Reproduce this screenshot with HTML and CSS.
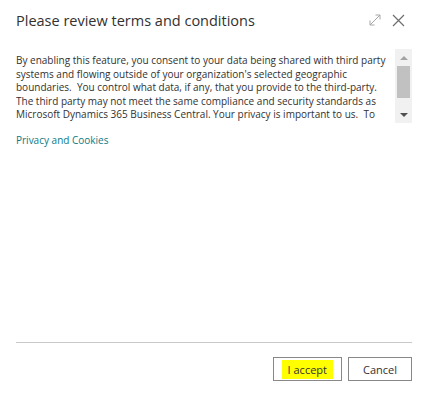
FILE: index.html
```html
<!DOCTYPE html>
<html lang="en">

<head>
    <meta charset="UTF-8">
    <meta name="viewport" content="width=device-width, initial-scale=1.0">
    <title>Terms</title>
    <link rel="stylesheet" href="styles.css">
</head>

<body>

    <div class="dialog">
        <div class="header">
            <h1 class="title">Please review terms and conditions</h1>
            <div class="headerIcons">
                <svg class="expandIcon" width="12" height="12" viewBox="0 0 12 12">
                    <path d="M1 11 L11 1 M6.5 1 H11 V5.5 M1 6.5 V11 H5.5" fill="none" stroke="#a6a6a6" stroke-width="1"/>
                </svg>
                <svg class="closeIcon" width="13" height="13" viewBox="0 0 13 13">
                    <path d="M1 1 L12 12 M12 1 L1 12" fill="none" stroke="#6e6e6e" stroke-width="1.2"/>
                </svg>
            </div>
        </div>

        <div class="terms">
            <div class="termsText">
                By enabling this feature, you consent to your data being shared with third party<br>
                systems and flowing outside of your organization's selected geographic<br>
                boundaries.&nbsp; You control what data, if any, that you provide to the third-party.<br>
                The third party may not meet the same compliance and security standards as<br>
                Microsoft Dynamics 365 Business Central. Your privacy is important to us.&nbsp; To
            </div>
            <div class="scrollbar">
                <div class="arrowUp"></div>
                <div class="track">
                    <div class="thumb"></div>
                </div>
                <div class="arrowDown"></div>
            </div>
        </div>

        <a class="privacy" href="#">Privacy and Cookies</a>

        <div class="spacer"></div>

        <div class="footer">
            <button class="btn acceptBtn"><span class="highlight">I accept</span></button>
            <button class="btn">Cancel</button>
        </div>
    </div>

</body>

</html>
```

FILE: styles.css
```css
body {
    margin: 0;
    font-family: "Open Sans", "Noto Sans", sans-serif;
    color: #323130;
    background: #ffffff;
}

.dialog {
    width: 426px;
    height: 396px;
    box-sizing: border-box;
    padding: 0 14px 0 16px;
    display: flex;
    flex-direction: column;
}

.header {
    display: flex;
    align-items: center;
    justify-content: space-between;
    height: 40px;
}

.title {
    margin: 0;
    font-size: 14.5px;
    font-weight: 400;
    color: #323130;
}

.headerIcons {
    display: flex;
    align-items: center;
    gap: 11px;
    padding-right: 7px;
}

.terms {
    display: flex;
    margin-top: 9px;
    height: 74px;
}

.termsText {
    flex: 1;
    overflow: hidden;
    white-space: nowrap;
    font-size: 10px;
    line-height: 13.5px;
    padding-top: 5px;
    color: #323130;
}

.scrollbar {
    width: 17px;
    background: #f1f1f1;
    display: flex;
    flex-direction: column;
    align-items: center;
}

.arrowUp,
.arrowDown {
    height: 17px;
    display: flex;
    align-items: center;
    justify-content: center;
}

.arrowUp::before {
    content: "";
    border-left: 4px solid transparent;
    border-right: 4px solid transparent;
    border-bottom: 4px solid #a3a3a3;
}

.arrowDown::before {
    content: "";
    border-left: 4px solid transparent;
    border-right: 4px solid transparent;
    border-top: 4px solid #505050;
}

.track {
    flex: 1;
    width: 100%;
}

.thumb {
    margin: 0 2px;
    height: 32px;
    background: #c1c1c1;
}

.privacy {
    margin-top: 10px;
    font-size: 10px;
    color: #0b7a87;
    text-decoration: none;
    align-self: flex-start;
}

.spacer {
    flex: 1;
}

.footer {
    border-top: 1px solid #c8c8c8;
    display: flex;
    justify-content: flex-end;
    gap: 6px;
    padding-top: 14px;
    padding-bottom: 15px;
}

.btn {
    height: 24px;
    min-width: 64px;
    padding: 0 8px;
    background: #ffffff;
    border: 1px solid #8a8886;
    font-family: "Open Sans", "Noto Sans", sans-serif;
    font-size: 11px;
    color: #323130;
}

.acceptBtn {
    min-width: 68px;
}

.highlight {
    background: #ffff00;
    padding: 2px 6px;
}
```
